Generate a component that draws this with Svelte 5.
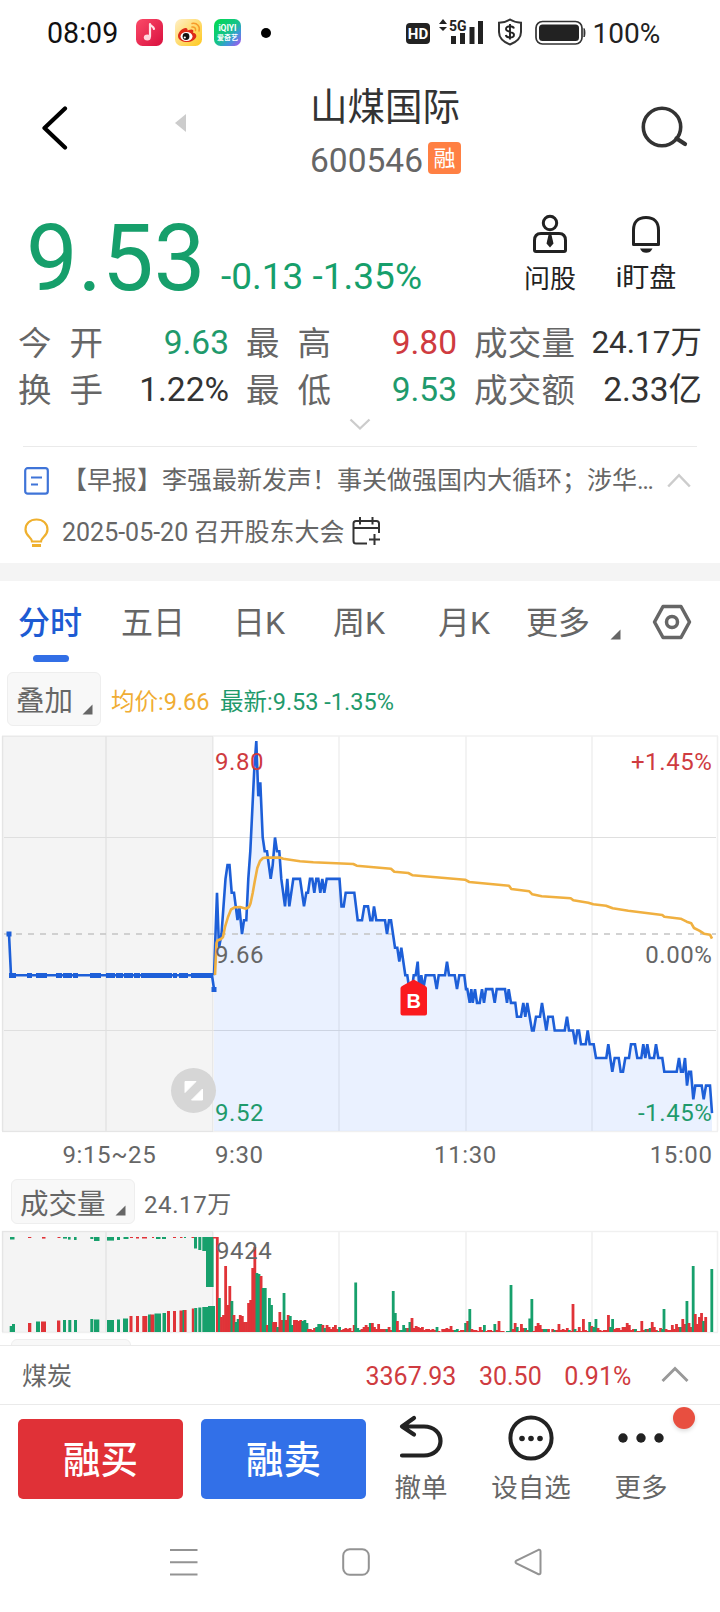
<script>
	const quotes = [
		{ label: "今开", value: "9.63", tone: "down" },
		{ label: "最高", value: "9.80", tone: "up" },
		{ label: "成交量", value: "24.17万", small: true },
		{ label: "换手", value: "1.22%" },
		{ label: "最低", value: "9.53", tone: "down" },
		{ label: "成交额", value: "2.33亿" },
	];

	const tabs = ["分时", "五日", "日K", "周K", "月K", "更多"];
	let activeTab = $state("分时");

	const PREV_CLOSE_Y = 199;
	const TICK = 13.78; // height of 0.01 yuan

	// x, distance from the previous close in ticks
	const price = [
		214, -3, 217, 3, 219, -1, 221.5, 0, 223.5, 2, 225.5, 4, 227.5, 5, 229.5, 5, 231.7, 3, 234, 3,
		237.5, 1, 239.3, 2, 242, 0, 244, 1, 246.3, 1, 248.3, 4, 250.3, 6, 252.3, 9, 254.3, 12, 256.3, 14,
		258.3, 10, 260.3, 11, 262.7, 7, 264.7, 6, 267, 6, 270.7, 4, 272.7, 5, 275, 7, 277, 6, 279.3, 6,
		281.3, 4, 285, 2, 287.3, 4, 289.3, 2, 293.3, 4, 300, 4, 304, 2, 306.3, 3, 308, 3, 310, 4, 312.3, 4,
		314.3, 3, 316.3, 4, 318.3, 4, 320.3, 3, 322.3, 4, 324.3, 3, 326.7, 4, 339.5, 4, 341.5, 2, 343.7, 2,
		345.7, 3, 354.3, 3, 357.7, 1, 362, 1, 364.3, 2, 368, 2, 370.3, 1, 372.3, 1, 374, 2, 376.3, 1,
		385, 1, 387, 0, 389, 1, 391, 1, 395, -1, 397.3, -1, 399.3, -2, 401.3, -1, 405.3, -3, 407.3, -3,
		409.3, -4, 412, -4, 413.7, -3, 415.7, -3, 417.7, -2, 419.3, -4, 421.3, -3, 423.3, -4, 425.7, -3,
		434.3, -3, 436.7, -4, 438.7, -3, 445, -3, 447, -2, 449, -3, 454.7, -3, 457, -4, 459.3, -3,
		464.3, -3, 466, -4, 467.3, -4, 469.7, -5, 471.3, -4, 472.7, -5, 475, -4, 477, -5, 479.7, -5,
		482, -4, 484, -5, 486, -4, 492.3, -4, 494.7, -5, 496.7, -4, 505, -4, 507, -5, 508.7, -4, 511, -5,
		515.3, -5, 517, -6, 521, -6, 523.3, -5, 525.3, -6, 527.3, -5, 532, -7, 533.7, -7, 536, -6,
		540, -6, 542, -5, 546.3, -7, 548.3, -6, 552.7, -6, 554.7, -7, 564.7, -7, 567, -6, 569, -7,
		573, -7, 575.3, -8, 577.3, -7, 579, -7, 581, -8, 585.7, -8, 587.7, -7, 589.7, -8, 593.7, -8,
		596, -9, 606.3, -9, 608.3, -8, 612.3, -10, 614.7, -9, 618.7, -9, 620.7, -10, 623, -10, 625.3, -9,
		629, -9, 631, -8, 635, -8, 637.3, -9, 641.3, -9, 643.3, -8, 645.3, -9, 647.3, -8, 649.7, -9,
		654, -9, 656, -8, 658.3, -9, 662.3, -9, 664.3, -10, 676.7, -10, 679, -9, 681, -10, 683, -10,
		685, -9, 687, -11, 689, -10, 691, -10, 693.3, -12, 695.3, -11, 701.7, -11, 703.7, -12, 706, -11,
		710, -11, 712, -13,
	];

	const points = [];
	for (let i = 0; i < price.length; i += 2) {
		points.push(`${price[i]},${(PREV_CLOSE_Y - price[i + 1] * TICK).toFixed(1)}`);
	}
	const priceLine = points.join(" ");
	const priceArea = `214,396 ${priceLine} 712,396`;

	const averageLine =
		"215,240 216.5,208 217.5,205.5 221,204 223,202 225,192 228,182 231,174.5 235,172.2 240,172 246,173.7 249,172 250.5,168.5 252.7,158 255,145 257.3,133 260,126 263,123 266,122.6 280,122.6 283.3,123.7 300,126.3 313.3,127.3 353.3,129 356.7,130.7 391,133.7 394.3,136.7 408.3,138 412.7,140.3 465,144.7 469.3,147 509,150.7 511.3,154 529.3,156.3 532.3,159.3 541.7,161.3 570.7,163.3 573.3,165.3 588.3,167.7 593.3,169.3 606,170.7 612.7,173.3 628.3,175.7 662.3,180 664.3,181.7 680.7,183.7 686.7,186.7 691.3,188.3 694,193 699.3,195.7 704,198.7 710,199.7 712,203.7";

	// call auction marks: x, width
	const auctionDots = [
		[9, 7], [27, 5], [36, 11], [56, 6], [63, 9], [73, 5], [90, 11], [106, 9], [116, 7], [124, 9],
		[134, 6], [141, 31], [173, 4], [179, 9], [191, 22],
	];

	// x, width, height, colour
	const auctionBars = [
		[9.7, 3, 6, "g"], [12, 3, 8, "g"], [28, 3.3, 9, "r"], [36, 4, 10.5, "g"], [41, 5, 10.5, "r"],
		[57, 3.3, 11.5, "r"], [63, 3, 12, "g"], [68.3, 3, 12, "g"], [74, 3, 12, "g"], [90.3, 3, 13, "g"],
		[94, 5.3, 12.5, "g"], [107, 7, 12, "g"], [117, 3, 12.5, "g"], [123, 5, 13.5, "g"],
		[129.5, 3, 16, "r"], [136, 3, 16, "r"], [142.3, 5, 16, "r"], [148, 3, 17.5, "g"],
		[150.5, 4, 17.5, "r"], [154.5, 6.5, 18.5, "g"], [162.5, 3.5, 19, "g"], [167, 3, 21, "r"],
		[173, 3, 21, "r"], [179.5, 3.5, 21.5, "r"], [182.5, 1.5, 22, "g"], [184, 2.6, 22, "r"],
		[191.8, 2.4, 23.5, "r"], [194.2, 3, 24, "g"], [198.3, 3, 24.5, "g"], [202.3, 12.7, 25, "g"],
		[208, 7, 26, "g"],
	];
	const unmatchedBars = [
		[10, 4.5, 2.5, "g"], [28, 3.3, 1, "r"], [42, 3.5, 1.6, "r"], [57.5, 3, 1, "r"], [63, 4, 1.6, "g"],
		[68, 2.6, 2.6, "g"], [74, 2.6, 3, "g"], [90.3, 3, 2, "g"], [94, 5.5, 4, "g"], [107, 7, 3.6, "g"],
		[117, 3, 3, "g"], [123.5, 5, 2, "g"], [130, 3, 1, "r"], [136, 3, 1.5, "r"], [142, 5, 1.5, "r"],
		[152, 2, 1, "r"], [156, 4.5, 2, "g"], [162, 4, 2, "g"], [173, 3, 1, "r"], [180, 2.5, 1, "r"],
		[184, 2, 1, "g"], [191.5, 2.5, 1, "r"], [194, 3, 11.5, "g"], [198.3, 3, 13, "g"],
		[202.3, 4, 14, "g"], [206, 7.6, 50, "g"], [213, 4, 1.5, "r"],
	];

	// minute volumes, each run starts at its own x
	const volumeRuns = [
		[217.3, "r95 g34 r15 r17 r66 r27 r46 g31 r17 g10 g13 r17 r16 r10 r10 r29 r32 r64 r85 g59 g58 r56 g44 g44 r7 g34 g27 r10 r10 g5 r20 r12 g39 r12 r17 g16 g7 r12 r12 r11 r12 g11 g12 g9"],
		[308.3, "r3 r3 r2 r4 g5 g8 g8 r7 g4 r7 r5 r3 r5 r7 r3 g5 r2 r3 r4 r3 r4 r1 r7"],
		[355.7, "g49.5 g4 g2 r3 r5 r7 r5 g9 r9 r5 r3 r8 r3 r3 r3 g3 r5 r2 g41 g19 r11 r2 g2 g7 g4 r4 g10 r14 r4 r6 r5 r4 r5 r2 r3 r3 r2 r3 r2 g5 r1"],
		[442.7, "r3 r3 r4 r3 r6 r2 g2 g3 r1 r2 r2 g9 r11 g23 r3 r2 r2 r1 r5 r2 g7 r1 r2 r2 r1 g8 r2 r11 r1 r1 r0 g1 g1"],
		[511, "g47 r3 r9 g5 r1 r8 r4 g4 r2 g13.5 g33 r1 r6 r9 r7 r3 g3 g3 r3 r0 r3 g2 r2 r8 r2 r3 r2 r4 g2 r1"],
		[573, "r28 g3 r1 r5 r1 r13 r2 r1 g10 r6 g5 g13 r4 r2 r1 r2 r2 r17 g5 g13 r3 r4 r4 r2 r5 r5 r9 r7 r2 r3 g3 r1 r1 r11 r2 g3 r3 g4 r10 r5 r2 g1 r4 g3"],
		[664, "g23 r3 r2 r2 r7 r3 r8 r5 g5 r13 r8 g31 r9 r5 g66 r18 r8 r15 r19 g11 r15"],
		[711.8, "g63"],
	];
	const volumes = volumeRuns.flatMap(([start, run]) =>
		run.split(" ").map((v, i) => ({ x: start + i * 2.085 - 1.4, h: Number(v.slice(1)), side: v[0] }))
	);
</script>

{#snippet corner()}
	<svg class="corner" width="11" height="11" viewBox="0 0 11 11"><path d="M10.5 0.5V10.5H0.5Z" fill="#666" /></svg>
{/snippet}

<div class="screen">
	<div class="status">
		<span class="clock">08:09</span>
		<svg class="app" width="27" height="27" viewBox="0 0 27 27">
			<defs>
				<linearGradient id="music" x2="1" y2="1"><stop stop-color="#fb4a68" /><stop offset="1" stop-color="#d9103f" /></linearGradient>
				<linearGradient id="weibo" x2="1" y2="1"><stop stop-color="#fff0c8" /><stop offset="1" stop-color="#ffc81c" /></linearGradient>
				<linearGradient id="qiyi" x2="1" y2="1"><stop stop-color="#00dc4b" /><stop offset=".5" stop-color="#16c38a" /><stop offset=".7" stop-color="#3a9ad8" /><stop offset="1" stop-color="#b44cf0" /></linearGradient>
			</defs>
			<rect width="27" height="27" rx="6.5" fill="url(#music)" />
			<path d="M14 5v12.5M14 5.5c1 2 3.5 1.5 4 4.5" stroke="#ffe3e8" stroke-width="2.2" fill="none" stroke-linecap="round" />
			<ellipse cx="11.3" cy="18.5" rx="3.5" ry="2.9" fill="#ffd5dd" />
		</svg>
		<svg class="app" width="27" height="27" viewBox="0 0 27 27">
			<rect width="27" height="27" rx="6.5" fill="url(#weibo)" />
			<path d="M3 17c0-4 5-8.5 8-8 2 .3 1.5 2.5 1.5 2.5s4-2 5.500-.5c1 1-.2 2.500-.2 2.500s4 .8 3.500 4C20.500 21 16 23 12 23s-9-2-9-6Z" fill="#dd2a18" />
			<ellipse cx="11.5" cy="17.5" rx="6" ry="4.5" fill="#fff" />
			<circle cx="11" cy="17.5" r="3.4" fill="#111" />
			<circle cx="9.8" cy="18.5" r="1.1" fill="#fff" />
			<path d="M17 8c2.500-.5 4 1.500 3.500 3.500M17 4.500c5-1 8.500 3 7 7.500" stroke="#f79a2a" stroke-width="1.5" fill="none" stroke-linecap="round" />
		</svg>
		<svg class="app" width="27" height="27" viewBox="0 0 27 27">
			<rect width="27" height="27" rx="6.5" fill="url(#qiyi)" />
			<text x="13.5" y="12" text-anchor="middle" class="qiyi-en">iQIYI</text>
			<text x="13.5" y="20.5" text-anchor="middle" class="qiyi-cn">爱奇艺</text>
		</svg>
		<i class="more-dot"></i>
		<span class="hd">HD</span>
		<svg class="signal" width="46" height="28" viewBox="0 0 46 28">
			<path d="M1 6 5 1 9 6ZM1 9 5 13 9 9Z" fill="#222" />
			<text x="11" y="13" class="net">5G</text>
			<path d="M13 18h5v8h-5ZM22 15h5v11h-5ZM31.5 9h5v17h-5ZM40 3h5v23h-5Z" fill="#222" />
		</svg>
		<svg class="shield" width="26" height="28" viewBox="0 0 26 28">
			<path d="M13 1.5c3 2 7 3 11 3.300V14c0 6-4.500 10-11 12.500C6.500 24 2 20 2 14V4.800c4-.3 8-1.300 11-3.300Z" fill="none" stroke="#333" stroke-width="2" />
			<path d="M17 10.500c-.5-1.500-2-2.200-4-2.200s-4 .7-4 2.700c0 3.700 8 2 8 5.700 0 2-1.900 2.800-4 2.800s-3.800-.8-4.200-2.500M13 6v15.500" fill="none" stroke="#222" stroke-width="1.9" />
		</svg>
		<svg class="battery" width="51" height="26" viewBox="0 0 51 26">
			<rect x="1" y="1.5" width="46" height="22.5" rx="6.5" fill="none" stroke="#333" stroke-width="1.7" />
			<rect x="4" y="4.5" width="40" height="16.5" rx="3.5" fill="#222" />
			<path d="M49 8.5c1.300 1 1.300 7.500 0 8.500Z" fill="#333" stroke="#333" />
		</svg>
		<span class="percent">100%</span>
	</div>

	<header>
		<svg class="back" width="26" height="44" viewBox="0 0 26 44"><path d="M23 2.500 2.500 22 23 41.500" fill="none" stroke="#000" stroke-width="4.200" stroke-linecap="round" stroke-linejoin="round" /></svg>
		<svg class="prev" width="12" height="18" viewBox="0 0 12 18"><path d="M0 9 11 0V18Z" fill="#ccc" /></svg>
		<div class="title">
			<h1>山煤国际</h1>
			<div class="code">600546<span class="badge">融</span></div>
		</div>
		<svg class="search" width="48" height="44" viewBox="0 0 48 44">
			<circle cx="21" cy="22" r="18.7" fill="none" stroke="#333" stroke-width="3.600" />
			<path d="M35.500 33.500 44 39" stroke="#333" stroke-width="4.200" stroke-linecap="round" />
		</svg>
	</header>

	<section class="summary">
		<strong class="last">9.53</strong>
		<span class="change">-0.13 -1.35%</span>
		<div class="tool ask">
			<svg width="38" height="40" viewBox="0 0 38 40">
				<g fill="none" stroke="#222" stroke-width="3"><circle cx="19" cy="9" r="6.700" /><path d="M12.500 19.500H10c-4.500 0-6.500 3-6.500 7V36q0 1.500 1.500 1.500H33q1.500 0 1.500-1.500V26.500c0-4-2-7-6.500-7H25.500M11 19.500H27" /></g>
				<path d="M17.500 21h3l2 8.500-3.500 4-3.500-4Z" fill="#222" />
			</svg>
			<span>问股</span>
		</div>
		<div class="tool watch">
			<svg width="30" height="40" viewBox="0 0 30 40">
				<path d="M2.500 30.500V16C2.500 8 7 3.500 15 3.500S27.500 8 27.500 16V30.500Z" fill="none" stroke="#222" stroke-width="3" stroke-linejoin="round" />
				<path d="M9 34.500H21.500C20 37.800 18 38.800 15.200 38.800S10.500 37.800 9 34.500Z" fill="#222" />
			</svg>
			<span>i盯盘</span>
		</div>
	</section>

	<section class="quotes">
		{#each quotes as q}
			<div class="quote">
				<span class="label">{#each q.label as ch}<b>{ch}</b>{/each}</span>
				<span class="value {q.tone}" class:small={q.small}>{q.value}</span>
			</div>
		{/each}
	</section>
	<svg class="expand" width="22" height="13" viewBox="0 0 22 13"><path d="M1.500 1.500 11 10.500 20.500 1.500" fill="none" stroke="#ccc" stroke-width="2.300" /></svg>

	<section class="news">
		<div class="news-row">
			<svg width="25" height="30" viewBox="0 0 25 30"><rect x="1.200" y="2.200" width="22.600" height="25.500" rx="2.500" fill="none" stroke="#3f74d8" stroke-width="2.200" /><path d="M7 11.500H18M7 18.500H14" stroke="#3f74d8" stroke-width="2" /></svg>
			<span class="headline">【早报】李强最新发声！事关做强国内大循环；涉华…</span>
			<svg class="fold" width="24" height="15" viewBox="0 0 24 15"><path d="M1.200 13.500 12 2.200 22.800 13.500" fill="none" stroke="#ccc" stroke-width="2.500" /></svg>
		</div>
		<div class="news-row">
			<svg width="25" height="30" viewBox="0 0 25 30"><path d="M8 23.500C8 19.500 1.500 18 1.500 11.500 1.500 5.500 6 1.500 12.500 1.500S23.500 5.500 23.500 11.500C23.500 18 17 19.500 17 23.500Z" fill="none" stroke="#efb02e" stroke-width="2.200" /><path d="M8 27.500H17" stroke="#efb02e" stroke-width="3" /></svg>
			<span>2025-05-20 召开股东大会</span>
			<svg class="calendar" width="29" height="29" viewBox="0 0 29 29"><path d="M15 26.500H4Q1.500 26.500 1.500 24V6.500Q1.500 4 4 4H24.500Q27 4 27 6.500V16M1.500 11H27M8 0V7.500M20.500 0V7.500M17 22.500H28M22.500 17V28" fill="none" stroke="#333" stroke-width="2" /></svg>
		</div>
	</section>

	<nav class="tabs">
		{#each tabs as tab}
			<button type="button" class:active={tab === activeTab} onclick={() => (activeTab = tab)}>{tab}</button>
		{/each}
		{@render corner()}
		<svg class="settings" width="40" height="36" viewBox="0 0 40 36"><path d="M11 2.500H29L37.500 18 29 33.500H11L2.500 18Z" fill="none" stroke="#666" stroke-width="3.500" stroke-linejoin="round" /><circle cx="20" cy="18" r="5.500" fill="none" stroke="#666" stroke-width="3.500" /></svg>
	</nav>

	<div class="legend">
		<span class="select">叠加{@render corner()}</span>
		<span class="avg">均价:9.66</span>
		<span class="down">最新:9.53 -1.35%</span>
	</div>

	<svg class="chart" width="720" height="439" viewBox="0 0 720 439">
		<rect x="2" y="1" width="211" height="396" fill="#f4f4f4" />
		<g class="grid">
			<path d="M2 1H718M2 396.500H718M2.500 1V396M106 1V396M213 1V396M339 1V396M466 1V396M592 1V396M717.500 1V396" stroke-width="1.600" />
			<path d="M4 102.500H716M4 295.500H716" stroke-width="1" stroke="#dfdfdf" />
		</g>
		<polygon points={priceArea} fill="#4080ff" fill-opacity=".11" />
		<path d="M4 199H716" stroke="#c4c4c4" stroke-width="1.700" stroke-dasharray="6 6" />
		<g fill="#1d5fd8">
			<rect x="6.500" y="196.500" width="5" height="5" />
			{#each auctionDots as [x, w]}
				<rect {x} y="238" width={w} height="5" />
			{/each}
			<rect x="211.500" y="252" width="5" height="5" />
		</g>
		<path d="M9 199 11 240.300H212L214 254" class="line" />
		<polyline points={priceLine} class="line" />
		<polyline points={averageLine} class="line average" />
		<g class="scale">
			<text x="215" y="35" fill="#cf3b40">9.80</text>
			<text x="215" y="228" fill="#666">9.66</text>
			<text x="215" y="386" fill="#1f9a6c">9.52</text>
			<g text-anchor="end">
				<text x="712.500" y="35" fill="#cf3b40">+1.45%</text>
				<text x="712.500" y="228" fill="#666">0.00%</text>
				<text x="712.500" y="386" fill="#1f9a6c">-1.45%</text>
				<text x="712.500" y="428" fill="#666">15:00</text>
			</g>
			<text x="62.500" y="428" fill="#666">9:15~25</text>
			<text x="215" y="428" fill="#666">9:30</text>
			<text x="465.500" y="428" fill="#666" text-anchor="middle">11:30</text>
		</g>
		<path d="M403 250.500 413.700 244.500 424.500 250.500Q427 251.500 427 253V278.500Q427 280.500 425 280.500H402.500Q400.500 280.500 400.500 278.500V253Q400.500 251.500 403 250.500Z" fill="#fb1a1e" />
		<text x="413.800" y="272.500" class="buy" text-anchor="middle">B</text>
		<circle cx="193.500" cy="355.500" r="22.500" fill="#d6d6d6" />
		<path d="M185 346.500H196L185 357.500ZM202.500 354V365H191.500Z" fill="#fff" stroke="#fff" stroke-linejoin="round" />
	</svg>

	<div class="legend volume-legend">
		<span class="select">成交量{@render corner()}</span>
		<span class="total">24.17万</span>
	</div>

	<svg class="volume" width="720" height="104" viewBox="0 0 720 104">
		<rect x="2" y="1" width="211" height="101" fill="#f4f4f4" />
		<path class="grid" d="M2 1.500H718M2 102.500H718M2.500 1V102M106 1V102M213 1V102M339 1V102M466 1V102M592 1V102M717.500 1V102" stroke-width="1.600" />
		{#each unmatchedBars as [x, w, h, side]}
			<rect {x} y="7" width={w} height={h} class={side} />
		{/each}
		{#each auctionBars as [x, w, h, side]}
			<rect {x} y={102 - h} width={w} height={h} class={side} />
		{/each}
		{#each volumes as v}
			<rect x={v.x} y={102 - v.h} width="2.800" height={v.h} class={v.side} />
		{/each}
		<text x="216" y="28.500" class="peak">9424</text>
	</svg>
	<div class="next-panel"><i></i></div>

	<section class="sector">
		<span class="name">煤炭</span>
		<span class="up">3367.93</span>
		<span class="up">30.50</span>
		<span class="up">0.91%</span>
		<svg width="28" height="17" viewBox="0 0 28 17"><path d="M1.500 15 14 2.500 26.500 15" fill="none" stroke="#999" stroke-width="2.900" /></svg>
	</section>

	<footer>
		<button type="button" class="trade buy-btn">融买</button>
		<button type="button" class="trade sell-btn">融卖</button>
		<div class="action cancel">
			<svg width="48" height="46" viewBox="0 0 48 46"><path d="M17 3 5 11.500 17 19.500M5 11.500H27C37 11.500 43.500 18 43.500 26S37 40.500 27 40.500H5" fill="none" stroke="#222" stroke-width="4.200" stroke-linecap="round" stroke-linejoin="round" /></svg>
			<span>撤单</span>
		</div>
		<div class="action custom">
			<svg width="46" height="46" viewBox="0 0 46 46"><circle cx="23" cy="23" r="20.600" fill="none" stroke="#222" stroke-width="4" /><g fill="#222"><circle cx="14" cy="23.500" r="2.800" /><circle cx="23" cy="23.500" r="2.800" /><circle cx="32" cy="23.500" r="2.800" /></g></svg>
			<span>设自选</span>
		</div>
		<div class="action more">
			<svg width="46" height="46" viewBox="0 0 46 46" fill="#222"><circle cx="5" cy="23" r="4.700" /><circle cx="23" cy="23" r="4.700" /><circle cx="41" cy="23" r="4.700" /></svg>
			<span>更多</span>
			<i class="notice"></i>
		</div>
	</footer>

	<div class="system">
		<svg width="28" height="30" viewBox="0 0 28 30"><path d="M0 3H27.500M0 15.200H27.500M0 27.500H27.500" /></svg>
		<svg width="28" height="30" viewBox="0 0 28 30"><rect x="1.200" y="2.200" width="25.600" height="25.600" rx="6.500" /></svg>
		<svg width="28" height="30" viewBox="0 0 28 30"><path d="M24.500 2.800 2.500 13.500Q.5 15 2.500 16.500L24.500 27.200Q26.500 27.800 26.500 25.500V4.500Q26.500 2.200 24.500 2.800Z" /></svg>
	</div>
</div>

<style>
	:global(body) {
		margin: 0;
		background: #fff;
	}
	.screen {
		width: 720px;
		height: 1612px;
		overflow: hidden;
		display: flex;
		flex-direction: column;
		background: #fff;
		color: #666;
		font-family: Roboto, "Noto Sans CJK SC", sans-serif;
	}
	.screen > * {
		flex: none;
	}
	svg {
		display: block;
		flex: none;
	}
	button {
		border: none;
		padding: 0;
		background: none;
		color: inherit;
		font: inherit;
	}
	.up {
		color: #cf3b40;
	}
	.down {
		color: #1f9a6c;
	}

	.status {
		display: flex;
		align-items: center;
		height: 65px;
		padding-left: 47px;
		font-size: 28px;
		color: #111;
	}
	.clock {
		width: 89px;
		font-size: 28.6px;
	}
	.app {
		margin-right: 12px;
	}
	.qiyi-en {
		font: bold 8.5px Roboto, sans-serif;
		fill: #fff;
	}
	.qiyi-cn {
		font: bold 7px "Noto Sans CJK SC", sans-serif;
		fill: #fff;
	}
	.more-dot {
		width: 10px;
		height: 10px;
		margin-left: 8px;
		border-radius: 50%;
		background: #000;
	}
	.hd {
		width: 24px;
		height: 21px;
		margin: 2px 0 0 135px;
		border-radius: 4px;
		background: #222;
		color: #fff;
		font-size: 15px;
		font-weight: 700;
		line-height: 22px;
		text-align: center;
	}
	.signal {
		margin-left: 7.5px;
		margin-bottom: 2px;
	}
	.net {
		font: bold 14px Roboto, sans-serif;
		fill: #222;
	}
	.shield {
		margin: 0 12px 2px 13px;
	}
	.percent {
		margin-left: 7px;
		padding-top: 2px;
		color: #222;
	}

	header {
		display: flex;
		align-items: flex-start;
		height: 125px;
		padding-left: 42px;
	}
	.back {
		margin-top: 40.5px;
	}
	.prev {
		margin: 48.5px 0 0 107px;
	}
	.title {
		width: 155px;
		margin: 19px 0 0 123px;
	}
	h1 {
		margin: 0;
		color: #333;
		font-size: 37.5px;
		font-weight: 400;
		line-height: 46px;
	}
	.code {
		display: flex;
		align-items: center;
		height: 54px;
		margin-top: 3.5px;
		font-size: 33.5px;
		line-height: 54px;
	}
	.badge {
		width: 33px;
		height: 32px;
		margin: 0 0 6px 5px;
		border-radius: 4px;
		background: #ff8043;
		color: #fff;
		font-size: 22px;
		line-height: 33px;
		text-align: center;
	}
	.search {
		margin: 40px 0 0 176px;
	}

	.summary {
		display: flex;
		height: 130px;
		padding-left: 26px;
		color: #169f6b;
	}
	.last {
		width: 195px;
		font-size: 92px;
		font-weight: 400;
		line-height: 138px;
	}
	.change {
		width: 299px;
		padding-top: 64px;
		font-size: 37px;
		line-height: 46px;
	}
	.tool {
		display: flex;
		flex-direction: column;
		align-items: center;
		width: 60px;
		padding-top: 24px;
		color: #222;
		font-size: 26px;
		line-height: 34px;
		white-space: nowrap;
	}
	.tool span {
		padding-top: 7px;
	}
	.ask span {
		padding-top: 8px;
	}
	.watch {
		margin-left: 36px;
	}
	.watch span {
		font-size: 27px;
	}

	.quotes {
		display: grid;
		grid-template-columns: 211px 211px 226px;
		grid-auto-rows: 46.5px;
		column-gap: 17px;
		height: 93px;
		padding-left: 18px;
		line-height: 46px;
	}
	.quote {
		display: flex;
		justify-content: space-between;
	}
	.quote:nth-child(3n) {
		width: 228px;
	}
	.label {
		display: flex;
		justify-content: space-between;
		width: 85px;
		font-size: 33.5px;
		margin-top: 1px;
	}
	.quote:nth-child(3n) .label {
		width: 101px;
	}
	.label b {
		font-weight: 400;
	}
	.value {
		font-size: 33.5px;
		color: #333;
	}
	.value.up {
		color: #cf3b40;
	}
	.value.down {
		color: #1f9a6c;
	}
	.value.small {
		font-size: 31.5px;
	}
	.expand {
		margin: 5px auto 16px;
	}

	.news {
		height: 116px;
		border-bottom: 18px solid #f4f4f4;
		font-size: 25px;
	}
	.news::before {
		content: "";
		display: block;
		height: 1px;
		margin: -1px 23px 0;
		background: #eaeaea;
	}
	.news-row {
		display: flex;
		align-items: center;
		height: 51px;
		padding-left: 24px;
	}
	.news-row:first-child {
		padding-top: 8px;
	}
	.news-row:last-child {
		padding-top: 1px;
	}
	.news-row span {
		margin-left: 13px;
		line-height: 50px;
	}
	.headline {
		width: 592px;
		white-space: nowrap;
	}
	.fold {
		margin-left: 13px;
	}
	.calendar {
		margin: 0 0 3px 8px;
	}

	.tabs {
		display: grid;
		grid-template-columns: 103px 112px 100px 105px 88px 84px 42px 40px;
		align-items: start;
		justify-items: start;
		height: 83px;
		padding-left: 18px;
		font-size: 32px;
		line-height: 42px;
	}
	.tabs button {
		padding-top: 21px;
	}
	.tabs .active {
		color: #1d5bd3;
		font-weight: 500;
	}
	.tabs .active::after {
		content: "";
		display: block;
		width: 36px;
		height: 7px;
		margin: 11px 0 0 15px;
		border-radius: 3.5px;
		background: #326fe6;
	}
	.tabs > :global(.corner) {
		margin-top: 48px;
	}
	.settings {
		margin-top: 23px;
	}

	.legend {
		display: flex;
		align-items: center;
		height: 71px;
		padding-left: 7px;
		font-size: 23.5px;
	}
	.select {
		display: flex;
		align-items: flex-end;
		box-sizing: border-box;
		width: 94px;
		height: 54px;
		padding: 0 0 10px 8px;
		margin-top: -1px;
		border: 1px solid #eee;
		border-radius: 6px;
		background: #f8f8f8;
		font-size: 28.5px;
		line-height: 27px;
	}
	.select .corner {
		margin-left: 9px;
	}
	.avg {
		width: 109px;
		margin: 0 0 0 10px;
		color: #f0ad33;
	}

	.chart {
		font-family: Roboto, sans-serif;
	}
	.grid {
		fill: none;
		stroke: #000;
		stroke-opacity: 0.06;
	}
	.grid path:last-child {
		stroke-opacity: 1;
	}
	.line {
		fill: none;
		stroke: #1d5fd8;
		stroke-width: 2.6;
	}
	.average {
		stroke: #f0b040;
		stroke-linejoin: round;
	}
	.scale text,
	.peak {
		font-size: 24px;
		letter-spacing: 0.6px;
	}
	.buy {
		font: bold 20px "Liberation Sans", sans-serif;
		fill: #fff;
	}

	.volume-legend {
		height: 56px;
		padding-left: 11px;
	}
	.volume-legend .select {
		width: 124px;
		height: 45px;
		padding: 0 0 7px 8px;
		line-height: 22px;
	}
	.total {
		margin-left: 9px;
		font-size: 24px;
		letter-spacing: 0.6px;
	}
	.r {
		fill: #e03338;
	}
	.g {
		fill: #17a06c;
	}
	.peak {
		fill: #666;
	}
	.next-panel {
		height: 11px;
		overflow: hidden;
		border-bottom: 1px solid #eaeaea;
	}
	.next-panel i {
		display: block;
		width: 118px;
		height: 30px;
		margin: 5px 0 0 11px;
		border: 1px solid #eee;
		border-radius: 6px;
		background: #f8f8f8;
	}

	.sector {
		display: flex;
		align-items: center;
		height: 58px;
		padding-left: 22px;
		border-bottom: 1px solid #eaeaea;
		font-size: 25px;
	}
	.sector span {
		padding-top: 3px;
		margin-right: 22.5px;
	}
	.sector .name {
		width: 321px;
		padding: 0 0 2px;
	}
	.sector svg {
		margin: 0 0 1px 7px;
	}

	footer {
		display: flex;
		align-items: flex-start;
		box-sizing: border-box;
		height: 113px;
		padding: 14px 0 0 18px;
	}
	.trade {
		width: 165px;
		height: 80px;
		padding-top: 2px;
		margin-right: 18px;
		border-radius: 5px;
		color: #fff;
		font-size: 37.5px;
		font-weight: 500;
		line-height: 78px;
	}
	.buy-btn {
		background: #e03137;
	}
	.sell-btn {
		background: #3270e8;
	}
	.action {
		position: relative;
		display: flex;
		flex-direction: column;
		align-items: center;
		font-size: 26.5px;
		line-height: 40px;
		margin-top: -4px;
	}
	.action svg {
		margin-bottom: 7px;
	}
	.cancel {
		width: 54px;
		margin-left: 10px;
	}
	.custom {
		width: 82px;
		margin-left: 42px;
	}
	.more {
		width: 54px;
		margin-left: 42px;
	}
	.notice {
		position: absolute;
		left: 59px;
		top: -8px;
		width: 22px;
		height: 22px;
		border-radius: 50%;
		background: #e84f40;
		box-shadow: 0 2px 4px rgba(0, 0, 0, 0.15);
	}

	.system {
		display: flex;
		gap: 144px;
		padding: 29px 0 0 170px;
	}
	.system svg {
		fill: none;
		stroke: #939393;
		stroke-width: 2;
	}
</style>
